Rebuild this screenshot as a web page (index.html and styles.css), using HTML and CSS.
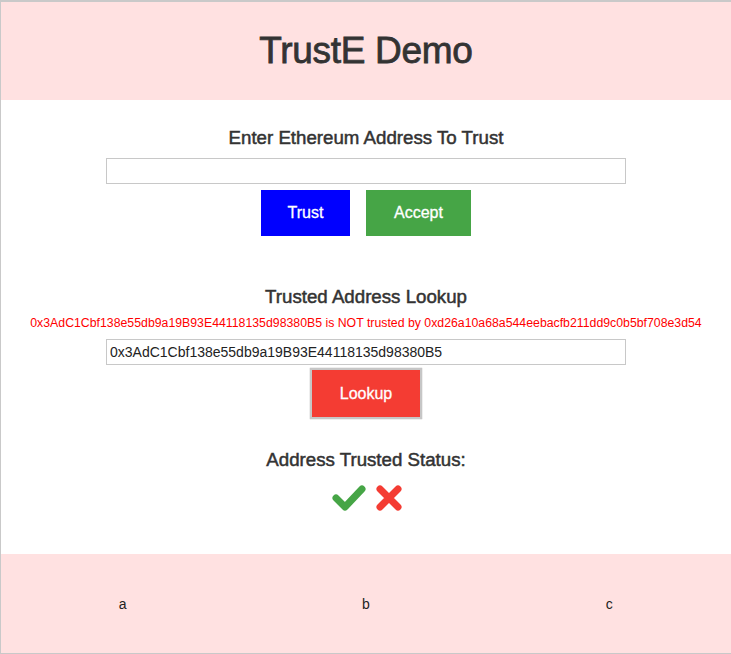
FILE: index.html
```html
<!DOCTYPE html>
<html lang="en">
<head>
  <meta charset="UTF-8">
  <title>TrustE Demo</title>
  <link rel="stylesheet" href="styles.css">
</head>
<body>
<div class="page">
  <header class="header">
    <h1>TrustE Demo</h1>
  </header>

  <main class="content">
    <h2 class="section-title">Enter Ethereum Address To Trust</h2>
    <input type="text" class="address-input" id="trustInput">
    <div class="button-row">
      <button class="btn btn-trust">Trust</button>
      <button class="btn btn-accept">Accept</button>
    </div>

    <h2 class="section-title lookup-title">Trusted Address Lookup</h2>
    <p class="lookup-result">0x3AdC1Cbf138e55db9a19B93E44118135d98380B5 is NOT trusted by 0xd26a10a68a544eebacfb211dd9c0b5bf708e3d54</p>
    <input type="text" class="address-input lookup-input" value="0x3AdC1Cbf138e55db9a19B93E44118135d98380B5">
    <button class="btn btn-lookup">Lookup</button>

    <h2 class="section-title status-title">Address Trusted Status:</h2>
    <div class="status-icons">
      <svg class="icon" width="36" height="30" viewBox="0 0 36 30">
        <polyline points="5,15 14,24 31,6" fill="none" stroke="#46a546" stroke-width="7" stroke-linecap="round" stroke-linejoin="round"/>
      </svg>
      <svg class="icon" width="26" height="30" viewBox="0 0 26 30">
        <path d="M4 6 L22 24 M22 6 L4 24" fill="none" stroke="#f43c33" stroke-width="7" stroke-linecap="round"/>
      </svg>
    </div>
  </main>

  <footer class="footer">
    <div class="footer-col">a</div>
    <div class="footer-col">b</div>
    <div class="footer-col">c</div>
  </footer>
</div>
</body>
</html>
```

FILE: styles.css
```css
html, body {
  margin: 0;
  height: 100%;
  background-color: white;
  font-family: "Liberation Sans", Arial, sans-serif;
  color: #333;
}

/* Whole window, with the thin grey frame round it */
.page {
  height: 654px;
  box-sizing: border-box;
  border-top: 2px solid #c9c9c9;
  border-left: 1px solid #c9c9c9;
  border-bottom: 1px solid #c9c9c9;
  display: flex;
  flex-direction: column;
}

.header {
  height: 98px;
  background-color: #ffe1e1;
  display: flex;
  align-items: center;
  justify-content: center;
}

.header h1 {
  margin: 0;
  font-size: 37px;
  font-weight: normal;
  -webkit-text-stroke: 0.8px #333;
  letter-spacing: -0.3px;
}

.content {
  flex: 1;
  display: flex;
  flex-direction: column;
  align-items: center;
  padding-top: 27px;
}

.section-title {
  margin: 0;
  font-size: 18.7px;
  line-height: 22px;
  font-weight: normal;
  -webkit-text-stroke: 0.5px #333;
}

.address-input {
  width: 520px;
  height: 26px;
  box-sizing: border-box;
  margin-top: 9px;
  border: 1px solid #c8c8c8;
  padding: 0 3px;
  font-family: "Liberation Sans", Arial, sans-serif;
  font-size: 14px;
  color: #222;
  outline: none;
}

.button-row {
  display: flex;
  gap: 16px;
  margin-top: 6px;
}

.btn {
  border: none;
  color: white;
  font-family: "Liberation Sans", Arial, sans-serif;
  font-size: 16px;
  -webkit-text-stroke: 0.3px white;
  cursor: pointer;
}

.btn-trust {
  width: 89px;
  height: 46px;
  background-color: #0000ff;
}

.btn-accept {
  width: 105px;
  height: 46px;
  background-color: #46a546;
}

.lookup-title {
  margin-top: 50px;
}

.lookup-result {
  margin: 7px 0 0;
  font-size: 12.3px;
  line-height: 16px;
  color: #ff0000;
}

.lookup-input {
  margin-top: 8px;
}

.btn-lookup {
  margin-top: 3px;
  width: 112px;
  height: 51px;
  background-color: #f43c33;
  border: 2px solid #c6c6c6;
  box-shadow: 0 0 1px #999;
}

.status-title {
  margin-top: 30px;
}

.status-icons {
  display: flex;
  align-items: center;
  gap: 9px;
  margin-top: 12px;
}

.footer {
  height: 99px;
  background-color: #ffe1e1;
  display: grid;
  grid-template-columns: 1fr 1fr 1fr;
  align-items: center;
  font-size: 14px;
  color: #222;
}

.footer-col {
  text-align: center;
}
```
